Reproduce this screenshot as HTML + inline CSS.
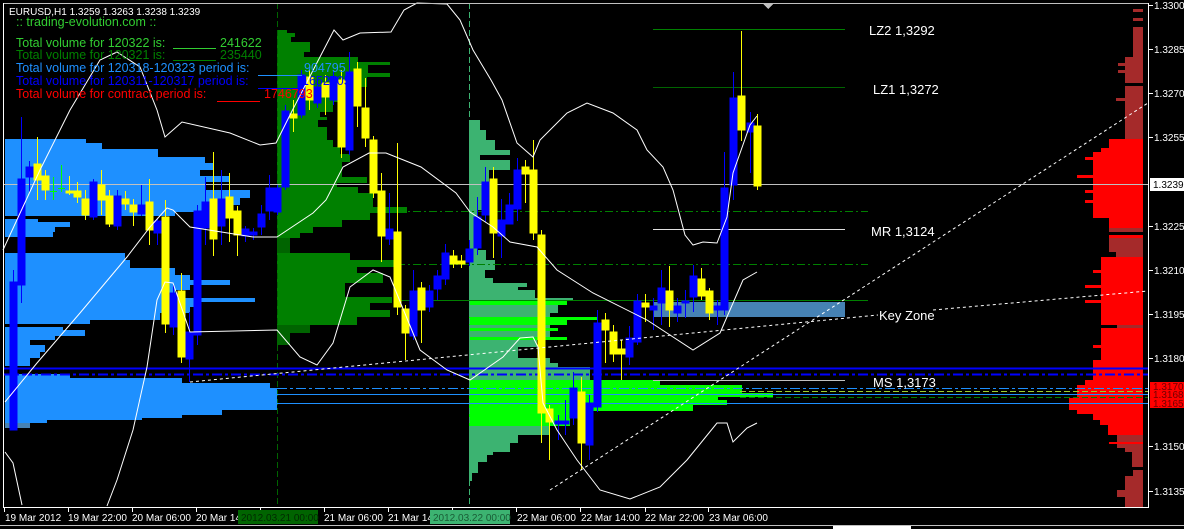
<!DOCTYPE html>
<html><head><meta charset="utf-8"><style>
html,body{margin:0;padding:0;background:#000;width:1184px;height:529px;overflow:hidden}
svg{display:block}
text{font-family:"Liberation Sans",Arial,sans-serif}
</style></head><body>
<svg width="1184" height="529" viewBox="0 0 1184 529" xmlns="http://www.w3.org/2000/svg" shape-rendering="crispEdges">
<rect width="1184" height="529" fill="#000"/>

<g fill="#1e90ff">
<rect x="5" y="139" width="81" height="4"/><rect x="5" y="143" width="97" height="6"/><rect x="5" y="149" width="153" height="8"/>
<rect x="5" y="157" width="200" height="6"/><rect x="5" y="163" width="208" height="7"/><rect x="5" y="170" width="195" height="6"/>
<rect x="5" y="176" width="225" height="6"/><rect x="5" y="182" width="200" height="8"/><rect x="5" y="190" width="245" height="8"/>
<rect x="5" y="198" width="235" height="7"/><rect x="5" y="205" width="225" height="7"/><rect x="5" y="212" width="170" height="4"/>
<rect x="5" y="219" width="33" height="3"/><rect x="5" y="222" width="65" height="5"/><rect x="5" y="227" width="50" height="5"/><rect x="5" y="232" width="48" height="5"/>
<rect x="5" y="253" width="120" height="7"/><rect x="5" y="260" width="125" height="8"/><rect x="5" y="268" width="170" height="7"/>
<rect x="5" y="275" width="185" height="5"/><rect x="5" y="280" width="225" height="5"/><rect x="5" y="285" width="185" height="5"/>
<rect x="5" y="290" width="170" height="8"/><rect x="5" y="298" width="250" height="4"/><rect x="5" y="302" width="195" height="5"/>
<rect x="5" y="307" width="185" height="6"/><rect x="5" y="313" width="155" height="7"/><rect x="5" y="320" width="85" height="4"/>
<rect x="5" y="327" width="58" height="3"/><rect x="5" y="330" width="80" height="6"/><rect x="5" y="336" width="50" height="4"/>
<rect x="5" y="340" width="25" height="5"/><rect x="5" y="345" width="40" height="7"/><rect x="5" y="352" width="35" height="6"/><rect x="5" y="358" width="25" height="8"/>
<rect x="5" y="374" width="65" height="4"/><rect x="5" y="378" width="177" height="5"/><rect x="5" y="383" width="265" height="5"/>
<rect x="5" y="388" width="272" height="22"/><rect x="5" y="410" width="217" height="5"/><rect x="5" y="415" width="177" height="3"/>
<rect x="5" y="418" width="137" height="2"/><rect x="5" y="420" width="42" height="3"/>
</g>
<rect x="5" y="423" width="25" height="5" fill="#4682b4"/>

<g fill="#008000">
<rect x="277" y="30" width="10" height="3"/><rect x="277" y="33" width="18" height="4"/><rect x="277" y="37" width="14" height="5"/>
<rect x="277" y="42" width="33" height="10"/><rect x="277" y="52" width="27" height="5"/><rect x="277" y="57" width="81" height="5"/>
<rect x="277" y="62" width="113" height="3"/><rect x="277" y="65" width="91" height="8"/><rect x="277" y="73" width="113" height="4"/>
<rect x="277" y="77" width="90" height="10"/><rect x="277" y="87" width="73" height="8"/><rect x="277" y="95" width="68" height="7"/>
<rect x="277" y="102" width="56" height="10"/><rect x="277" y="112" width="43" height="5"/><rect x="277" y="117" width="50" height="3"/>
<rect x="277" y="120" width="41" height="7"/><rect x="277" y="127" width="50" height="13"/><rect x="277" y="140" width="56" height="7"/>
<rect x="277" y="147" width="63" height="7"/><rect x="277" y="154" width="73" height="8"/><rect x="277" y="162" width="65" height="15"/>
<rect x="277" y="177" width="90" height="6"/><rect x="277" y="183" width="60" height="4"/><rect x="277" y="187" width="81" height="6"/>
<rect x="277" y="193" width="96" height="14"/><rect x="277" y="207" width="130" height="6"/><rect x="277" y="213" width="93" height="7"/>
<rect x="277" y="220" width="65" height="7"/><rect x="277" y="227" width="36" height="6"/><rect x="277" y="233" width="23" height="5"/>
<rect x="277" y="253" width="73" height="7"/><rect x="277" y="260" width="120" height="7"/><rect x="277" y="267" width="80" height="6"/>
<rect x="277" y="273" width="106" height="10"/><rect x="277" y="283" width="68" height="14"/><rect x="277" y="297" width="115" height="6"/>
<rect x="277" y="303" width="93" height="7"/><rect x="277" y="310" width="113" height="7"/><rect x="277" y="317" width="80" height="8"/>
</g>
<g fill="#006400"><rect x="277" y="238" width="13" height="15"/><rect x="277" y="325" width="33" height="8"/><rect x="277" y="333" width="13" height="12"/></g>

<g fill="#3cb371">
<rect x="469" y="120" width="11" height="10"/><rect x="469" y="130" width="17" height="10"/><rect x="469" y="140" width="26" height="10"/>
<rect x="469" y="150" width="41" height="5"/><rect x="469" y="155" width="11" height="5"/><rect x="469" y="160" width="41" height="10"/>
<rect x="469" y="170" width="20" height="40"/><rect x="469" y="210" width="8" height="40"/>
<rect x="469" y="250" width="17" height="10"/><rect x="469" y="260" width="26" height="10"/><rect x="469" y="270" width="16" height="8"/>
<rect x="469" y="278" width="24" height="5"/><rect x="469" y="283" width="58" height="4"/><rect x="469" y="287" width="49" height="3"/>
<rect x="469" y="290" width="66" height="8"/><rect x="469" y="298" width="104" height="3"/><rect x="469" y="305" width="89" height="8"/>
<rect x="469" y="313" width="81" height="4"/><rect x="469" y="325" width="81" height="3"/><rect x="469" y="331" width="81" height="6"/>
<rect x="469" y="340" width="68" height="7"/><rect x="469" y="347" width="49" height="11"/><rect x="469" y="358" width="81" height="5"/>
<rect x="469" y="363" width="89" height="4"/><rect x="469" y="367" width="121" height="13"/>
<rect x="469" y="426" width="81" height="9"/><rect x="469" y="435" width="49" height="8"/><rect x="469" y="443" width="41" height="9"/>
<rect x="469" y="452" width="24" height="3"/><rect x="469" y="455" width="18" height="7"/><rect x="469" y="462" width="9" height="11"/><rect x="469" y="473" width="3" height="8"/>
</g>
<g fill="#00ff00">
<rect x="469" y="301" width="98" height="4"/><rect x="469" y="317" width="128" height="3"/><rect x="469" y="320" width="98" height="5"/>
<rect x="469" y="328" width="89" height="3"/><rect x="469" y="337" width="98" height="3"/>
<rect x="469" y="380" width="191" height="5"/><rect x="469" y="385" width="273" height="8"/><rect x="469" y="393" width="304" height="4"/>
<rect x="469" y="397" width="249" height="3"/><rect x="469" y="400" width="258" height="5"/><rect x="469" y="405" width="224" height="6"/>
<rect x="469" y="411" width="101" height="15"/>
</g>

<g fill="#a52a2a">
<rect x="1133" y="9" width="10" height="3"/><rect x="1133" y="18" width="10" height="3"/><rect x="1133" y="27" width="10" height="30"/>
<rect x="1125" y="57" width="18" height="26"/><rect x="1118" y="63" width="7" height="3"/><rect x="1118" y="70" width="7" height="3"/>
<rect x="1125" y="86" width="18" height="54"/><rect x="1116" y="98" width="9" height="3"/>
<rect x="1109" y="228" width="34" height="4"/><rect x="1109" y="238" width="34" height="14"/><rect x="1116" y="252" width="27" height="5"/>
<rect x="1117" y="325" width="26" height="3"/>
<rect x="1117" y="435" width="26" height="7"/><rect x="1117" y="444" width="26" height="4"/><rect x="1125" y="448" width="18" height="4"/>
<rect x="1132" y="452" width="11" height="15"/><rect x="1133" y="470" width="10" height="6"/><rect x="1125" y="476" width="18" height="14"/>
<rect x="1117" y="490" width="26" height="7"/><rect x="1125" y="497" width="18" height="10"/>
</g>
<g fill="#ff0000">
<rect x="1109" y="139" width="34" height="9"/><rect x="1101" y="148" width="42" height="4"/><rect x="1093" y="152" width="50" height="66"/>
<rect x="1085" y="157" width="8" height="3"/><rect x="1077" y="175" width="16" height="3"/><rect x="1085" y="190" width="8" height="3"/><rect x="1085" y="200" width="8" height="3"/>
<rect x="1109" y="218" width="34" height="10"/><rect x="1109" y="235" width="34" height="3"/>
<rect x="1101" y="257" width="42" height="68"/><rect x="1093" y="270" width="8" height="3"/><rect x="1085" y="285" width="16" height="3"/><rect x="1085" y="300" width="16" height="3"/>
<rect x="1101" y="328" width="42" height="32"/><rect x="1093" y="345" width="8" height="3"/>
<rect x="1093" y="360" width="50" height="20"/><rect x="1085" y="380" width="58" height="5"/><rect x="1077" y="385" width="66" height="13"/>
<rect x="1069" y="398" width="74" height="12"/><rect x="1077" y="410" width="66" height="4"/><rect x="1093" y="414" width="50" height="6"/>
<rect x="1100" y="420" width="43" height="5"/><rect x="1108" y="425" width="35" height="10"/><rect x="1109" y="442" width="34" height="2"/>
</g>

<rect x="653" y="302" width="192" height="15" fill="#4682b4"/>

<line x1="277.5" y1="3" x2="277.5" y2="507" stroke="#006400" stroke-dasharray="6,3"/>
<line x1="469.5" y1="3" x2="469.5" y2="507" stroke="#3cb371" stroke-dasharray="6,3"/>

<line x1="3" y1="184.5" x2="1148" y2="184.5" stroke="#c0c0c0"/>
<line x1="397" y1="211.5" x2="868" y2="211.5" stroke="#008000" stroke-dasharray="8,3,2,3"/>
<line x1="397" y1="264.5" x2="868" y2="264.5" stroke="#008000" stroke-dasharray="8,3,2,3"/>
<line x1="397" y1="300.5" x2="868" y2="300.5" stroke="#008000"/>
<line x1="653" y1="29.5" x2="845" y2="29.5" stroke="#008000"/>
<line x1="653" y1="87.5" x2="845" y2="87.5" stroke="#006400"/>
<line x1="653" y1="229.5" x2="845" y2="229.5" stroke="#e0e0e0"/>
<line x1="653" y1="380.5" x2="845" y2="380.5" stroke="#c0c0c0"/>
<line x1="3" y1="368.5" x2="1148" y2="368.5" stroke="#0000ff" stroke-width="2"/>
<line x1="3" y1="374.5" x2="1148" y2="374.5" stroke="#0000ff" stroke-dasharray="10,3,3,3" stroke-width="2"/>
<line x1="277" y1="388.5" x2="1148" y2="388.5" stroke="#1e90ff" stroke-dasharray="10,3,3,3"/>
<line x1="740" y1="391.5" x2="1148" y2="391.5" stroke="#9acd32" stroke-dasharray="6,3"/>
<line x1="277" y1="394.5" x2="1148" y2="394.5" stroke="#1e90ff"/>
<line x1="740" y1="397.5" x2="1148" y2="397.5" stroke="#008000" stroke-dasharray="6,3"/>
<line x1="277" y1="403.5" x2="1148" y2="403.5" stroke="#1e90ff"/>

<g stroke-width="1">
<g stroke="#0000ff" fill="#0000ff">
<line x1="13.5" y1="270" x2="13.5" y2="430"/><rect x="10" y="282" width="7" height="148"/>
<line x1="21.5" y1="117" x2="21.5" y2="303"/><rect x="18" y="179" width="7" height="106"/>
<line x1="29.5" y1="161" x2="29.5" y2="193"/><rect x="26" y="167" width="7" height="10"/>
<line x1="93.5" y1="179" x2="93.5" y2="220"/><rect x="90" y="182" width="7" height="35"/>
<line x1="117.5" y1="190" x2="117.5" y2="230"/><rect x="114" y="196" width="7" height="30"/>
<line x1="141.5" y1="185" x2="141.5" y2="216"/><rect x="138" y="205" width="7" height="9"/>
<line x1="157.5" y1="218" x2="157.5" y2="245"/><rect x="154" y="221" width="7" height="12"/>
<line x1="173.5" y1="285" x2="173.5" y2="335"/><rect x="170" y="293" width="7" height="34"/>
<line x1="189.5" y1="312" x2="189.5" y2="382"/><rect x="186" y="332" width="7" height="27"/>
<line x1="197.5" y1="205" x2="197.5" y2="345"/><rect x="194" y="211" width="7" height="124"/>
<line x1="205.5" y1="177" x2="205.5" y2="245"/><rect x="202" y="202" width="7" height="26"/>
<line x1="221.5" y1="170" x2="221.5" y2="245"/><rect x="218" y="199" width="7" height="27"/>
<line x1="245.5" y1="226" x2="245.5" y2="242"/><rect x="242" y="229" width="7" height="7"/>
<line x1="253.5" y1="228" x2="253.5" y2="240"/><rect x="250" y="232" width="7" height="3"/>
<line x1="261.5" y1="205" x2="261.5" y2="235"/><rect x="258" y="214" width="7" height="13"/>
<line x1="269.5" y1="175" x2="269.5" y2="220"/><rect x="266" y="188" width="7" height="23"/>
<line x1="277.5" y1="185" x2="277.5" y2="215"/><rect x="274" y="188" width="7" height="24"/>
<line x1="285.5" y1="105" x2="285.5" y2="190"/><rect x="282" y="111" width="7" height="76"/>
<line x1="301.5" y1="70" x2="301.5" y2="118"/><rect x="298" y="75" width="7" height="40"/>
<line x1="317.5" y1="80" x2="317.5" y2="108"/><rect x="314" y="87" width="7" height="16"/>
<line x1="333.5" y1="70" x2="333.5" y2="105"/><rect x="330" y="77" width="7" height="23"/>
<line x1="349.5" y1="52" x2="349.5" y2="155"/><rect x="346" y="72" width="7" height="78"/>
<line x1="389.5" y1="193" x2="389.5" y2="245"/><rect x="386" y="229" width="7" height="10"/>
<line x1="413.5" y1="270" x2="413.5" y2="340"/><rect x="410" y="291" width="7" height="45"/>
<line x1="429.5" y1="285" x2="429.5" y2="312"/><rect x="426" y="291" width="7" height="16"/>
<line x1="437.5" y1="270" x2="437.5" y2="300"/><rect x="434" y="276" width="7" height="13"/>
<line x1="445.5" y1="244" x2="445.5" y2="285"/><rect x="442" y="253" width="7" height="26"/>
<line x1="469.5" y1="240" x2="469.5" y2="266"/><rect x="466" y="249" width="7" height="13"/>
<line x1="477.5" y1="197" x2="477.5" y2="255"/><rect x="474" y="217" width="7" height="31"/>
<line x1="485.5" y1="167" x2="485.5" y2="222"/><rect x="482" y="182" width="7" height="33"/>
<line x1="501.5" y1="199" x2="501.5" y2="258"/><rect x="498" y="220" width="7" height="16"/>
<line x1="509.5" y1="193" x2="509.5" y2="222"/><rect x="506" y="205" width="7" height="19"/>
<line x1="517.5" y1="158" x2="517.5" y2="221"/><rect x="514" y="170" width="7" height="39"/>
<line x1="558.5" y1="415" x2="558.5" y2="440"/><rect x="555" y="421" width="7" height="3"/>
<line x1="565.5" y1="400" x2="565.5" y2="435"/><rect x="562" y="421" width="7" height="3"/>
<line x1="573.5" y1="372" x2="573.5" y2="425"/><rect x="570" y="388" width="7" height="30"/>
<line x1="589.5" y1="395" x2="589.5" y2="460"/><rect x="586" y="403" width="7" height="42"/>
<line x1="597.5" y1="310" x2="597.5" y2="412"/><rect x="594" y="323" width="7" height="84"/>
<line x1="629.5" y1="326" x2="629.5" y2="365"/><rect x="626" y="338" width="7" height="19"/>
<line x1="637.5" y1="294" x2="637.5" y2="345"/><rect x="634" y="301" width="7" height="41"/>
<line x1="653.5" y1="298" x2="653.5" y2="330"/><rect x="650" y="306" width="7" height="4"/>
<line x1="661.5" y1="270" x2="661.5" y2="325"/><rect x="658" y="288" width="7" height="15"/>
<line x1="677.5" y1="298" x2="677.5" y2="322"/><rect x="674" y="306" width="7" height="7"/>
<line x1="685.5" y1="290" x2="685.5" y2="318"/><rect x="682" y="301" width="7" height="2"/>
<line x1="693.5" y1="265" x2="693.5" y2="312"/><rect x="690" y="276" width="7" height="21"/>
<line x1="717.5" y1="300" x2="717.5" y2="325"/><rect x="714" y="306" width="7" height="4"/>
<line x1="724.5" y1="152" x2="724.5" y2="315"/><rect x="721" y="188" width="7" height="122"/>
<line x1="733.5" y1="72" x2="733.5" y2="200"/><rect x="730" y="98" width="7" height="87"/>
<line x1="750.5" y1="112" x2="750.5" y2="173"/><rect x="747" y="123" width="7" height="9"/>
</g>
<g stroke="#ffff00" fill="#ffff00">
<line x1="37.5" y1="137" x2="37.5" y2="200"/><rect x="34" y="164" width="7" height="16"/>
<line x1="45.5" y1="170" x2="45.5" y2="200"/><rect x="42" y="176" width="7" height="14"/>
<line x1="69.5" y1="176" x2="69.5" y2="195"/><rect x="66" y="191" width="7" height="2"/>
<line x1="77.5" y1="182" x2="77.5" y2="203"/><rect x="74" y="191" width="7" height="6"/>
<line x1="85.5" y1="190" x2="85.5" y2="220"/><rect x="82" y="199" width="7" height="16"/>
<line x1="101.5" y1="170" x2="101.5" y2="215"/><rect x="98" y="185" width="7" height="15"/>
<line x1="109.5" y1="190" x2="109.5" y2="227"/><rect x="106" y="196" width="7" height="28"/>
<line x1="125.5" y1="191" x2="125.5" y2="210"/><rect x="122" y="199" width="7" height="5"/>
<line x1="133.5" y1="199" x2="133.5" y2="226"/><rect x="130" y="205" width="7" height="7"/>
<line x1="149.5" y1="179" x2="149.5" y2="245"/><rect x="146" y="202" width="7" height="28"/>
<line x1="165.5" y1="200" x2="165.5" y2="333"/><rect x="162" y="217" width="7" height="107"/>
<line x1="181.5" y1="273" x2="181.5" y2="363"/><rect x="178" y="291" width="7" height="66"/>
<line x1="213.5" y1="152" x2="213.5" y2="256"/><rect x="210" y="199" width="7" height="40"/>
<line x1="229.5" y1="173" x2="229.5" y2="242"/><rect x="226" y="197" width="7" height="21"/>
<line x1="237.5" y1="206" x2="237.5" y2="256"/><rect x="234" y="211" width="7" height="24"/>
<line x1="293.5" y1="100" x2="293.5" y2="132"/><rect x="290" y="114" width="7" height="4"/>
<line x1="309.5" y1="70" x2="309.5" y2="110"/><rect x="306" y="77" width="7" height="23"/>
<line x1="325.5" y1="75" x2="325.5" y2="115"/><rect x="322" y="83" width="7" height="14"/>
<line x1="341.5" y1="70" x2="341.5" y2="158"/><rect x="338" y="80" width="7" height="67"/>
<line x1="357.5" y1="62" x2="357.5" y2="127"/><rect x="354" y="69" width="7" height="37"/>
<line x1="365.5" y1="78" x2="365.5" y2="147"/><rect x="362" y="108" width="7" height="30"/>
<line x1="373.5" y1="136" x2="373.5" y2="198"/><rect x="370" y="140" width="7" height="53"/>
<line x1="381.5" y1="173" x2="381.5" y2="262"/><rect x="378" y="191" width="7" height="45"/>
<line x1="397.5" y1="143" x2="397.5" y2="315"/><rect x="394" y="232" width="7" height="75"/>
<line x1="405.5" y1="305" x2="405.5" y2="360"/><rect x="402" y="309" width="7" height="24"/>
<line x1="421.5" y1="282" x2="421.5" y2="343"/><rect x="418" y="288" width="7" height="22"/>
<line x1="453.5" y1="250" x2="453.5" y2="268"/><rect x="450" y="256" width="7" height="8"/>
<line x1="461.5" y1="255" x2="461.5" y2="268"/><rect x="458" y="261" width="7" height="3"/>
<line x1="493.5" y1="167" x2="493.5" y2="258"/><rect x="490" y="179" width="7" height="54"/>
<line x1="525.5" y1="160" x2="525.5" y2="203"/><rect x="522" y="167" width="7" height="7"/>
<line x1="533.5" y1="140" x2="533.5" y2="240"/><rect x="530" y="170" width="7" height="63"/>
<line x1="541.5" y1="230" x2="541.5" y2="443"/><rect x="538" y="235" width="7" height="178"/>
<line x1="549.5" y1="405" x2="549.5" y2="460"/><rect x="546" y="409" width="7" height="13"/>
<line x1="581.5" y1="377" x2="581.5" y2="470"/><rect x="578" y="392" width="7" height="51"/>
<line x1="605.5" y1="313" x2="605.5" y2="363"/><rect x="602" y="320" width="7" height="10"/>
<line x1="613.5" y1="325" x2="613.5" y2="362"/><rect x="610" y="332" width="7" height="22"/>
<line x1="621.5" y1="340" x2="621.5" y2="380"/><rect x="618" y="349" width="7" height="5"/>
<line x1="645.5" y1="294" x2="645.5" y2="322"/><rect x="642" y="303" width="7" height="4"/>
<line x1="669.5" y1="266" x2="669.5" y2="327"/><rect x="666" y="291" width="7" height="19"/>
<line x1="701.5" y1="268" x2="701.5" y2="300"/><rect x="698" y="279" width="7" height="17"/>
<line x1="709.5" y1="288" x2="709.5" y2="320"/><rect x="706" y="291" width="7" height="22"/>
<line x1="741.5" y1="31" x2="741.5" y2="141"/><rect x="738" y="96" width="7" height="34"/>
<line x1="757.5" y1="114" x2="757.5" y2="190"/><rect x="754" y="126" width="7" height="60"/>
</g>
<g stroke="#00ff00"><line x1="53.5" y1="177" x2="53.5" y2="200"/><line x1="50" y1="191.5" x2="57" y2="191.5"/><line x1="61.5" y1="165" x2="61.5" y2="192"/><line x1="58" y1="188.5" x2="65" y2="188.5"/></g>
</g>

<g fill="none" stroke="#fff" stroke-width="1" shape-rendering="auto">
<polyline points="3,250 40,170 70,110 100,60 117,52 140,67 157,110 165,137 182,122 230,133 260,145 276,143 291,113 308,80 334,30 343,40 360,33 391,32 404,10 417,3 447,4 460,20 473,50 491,80 502,100 517,143 533,157 540,140 567,113 587,103 613,113 637,130 647,150 663,167 673,190 685,235 693,245 703,242 717,243 727,217 733,173 750,125 757,116"/>
<polyline points="5,402 37,363 80,313 127,257 150,227 167,208 173,210 190,227 253,237 277,237 313,213 326,200 343,167 369,153 386,153 421,167 456,193 470,212 493,227 510,242 537,247 557,270 593,293 647,320 693,350 720,333 743,280 757,272"/>
<polyline points="107,506 117,480 133,430 147,367 157,300 165,282 173,283 190,332 277,330 300,357 317,365 333,343 350,287 373,270 390,277 420,350 447,370 470,380 503,357 520,338 533,337 538,347 543,403 557,430 577,460 600,490 630,499 660,487 687,460 717,423 727,423 733,442 747,428 757,423"/>
<polyline points="5,452 13,463 22,505"/>
</g>
<g fill="none" stroke="#fff" stroke-dasharray="3,3" shape-rendering="auto">
<line x1="190" y1="382" x2="878" y2="315"/><line x1="933" y1="310" x2="1148" y2="291"/>
<line x1="550" y1="490" x2="1148" y2="103"/>
</g>

<line x1="3" y1="3.5" x2="1148" y2="3.5" stroke="#c0c0c0"/>
<line x1="3.5" y1="3" x2="3.5" y2="508" stroke="#fff"/>
<line x1="1148.5" y1="3" x2="1148.5" y2="508" stroke="#fff"/>
<line x1="3" y1="507.5" x2="1149" y2="507.5" stroke="#fff"/>
<path d="M763 4h10l-5 5z" fill="#c0c0c0"/>

<g stroke="#fff">
<line x1="1149" y1="5.5" x2="1153" y2="5.5"/><line x1="1149" y1="49.5" x2="1153" y2="49.5"/><line x1="1149" y1="93.5" x2="1153" y2="93.5"/>
<line x1="1149" y1="137.5" x2="1153" y2="137.5"/><line x1="1149" y1="226.5" x2="1153" y2="226.5"/><line x1="1149" y1="270.5" x2="1153" y2="270.5"/>
<line x1="1149" y1="314.5" x2="1153" y2="314.5"/><line x1="1149" y1="358.5" x2="1153" y2="358.5"/><line x1="1149" y1="446.5" x2="1153" y2="446.5"/><line x1="1149" y1="491.5" x2="1153" y2="491.5"/>
<line x1="4.5" y1="508" x2="4.5" y2="512"/><line x1="68.5" y1="508" x2="68.5" y2="512"/><line x1="132.5" y1="508" x2="132.5" y2="512"/>
<line x1="196.5" y1="508" x2="196.5" y2="512"/><line x1="260.5" y1="508" x2="260.5" y2="512"/><line x1="324.5" y1="508" x2="324.5" y2="512"/>
<line x1="388.5" y1="508" x2="388.5" y2="512"/><line x1="452.5" y1="508" x2="452.5" y2="512"/><line x1="516.5" y1="508" x2="516.5" y2="512"/>
<line x1="580.5" y1="508" x2="580.5" y2="512"/><line x1="645.5" y1="508" x2="645.5" y2="512"/><line x1="708.5" y1="508" x2="708.5" y2="512"/>
</g>

<g fill="#fff" font-size="10">
<text x="1154" y="9">1.3300</text><text x="1154" y="53">1.3285</text><text x="1154" y="97">1.3270</text>
<text x="1154" y="141">1.3255</text><text x="1154" y="230">1.3225</text><text x="1154" y="274">1.3210</text>
<text x="1154" y="318">1.3195</text><text x="1154" y="362">1.3180</text><text x="1154" y="450">1.3150</text><text x="1154" y="495">1.3135</text>
</g>
<rect x="1150" y="178" width="34" height="13" fill="#fff"/>
<text x="1153" y="188" font-size="10" fill="#000">1.3239</text>
<rect x="1150" y="382" width="34" height="26" fill="#ff0000"/>
<g font-size="10" fill="#700000"><text x="1153" y="390">1.3170</text><text x="1153" y="398">1.3168</text><text x="1153" y="407">1.3165</text></g>

<g fill="#fff" font-size="10">
<text x="5" y="521">19 Mar 2012</text><text x="68" y="521">19 Mar 22:00</text><text x="132" y="521">20 Mar 06:00</text>
<text x="196" y="521">20 Mar 14</text><text x="324" y="521">21 Mar 06:00</text><text x="388" y="521">21 Mar 14</text>
<text x="517" y="521">22 Mar 06:00</text><text x="581" y="521">22 Mar 14:00</text><text x="645" y="521">22 Mar 22:00</text><text x="709" y="521">23 Mar 06:00</text>
</g>
<rect x="238" y="510" width="80" height="14" fill="#006400"/>
<text x="241" y="521" font-size="10" fill="#002a00">2012.03.21 00:00</text>
<rect x="430" y="510" width="80" height="14" fill="#3cb371"/>
<text x="433" y="521" font-size="10" fill="#1a5c36">2012.03.22 00:00</text>
<line x1="0" y1="525.5" x2="1184" y2="525.5" stroke="#c0c0c0"/>
<rect x="833" y="526" width="78" height="3" fill="#fff"/>

<g fill="#fff" font-size="13">
<text x="869" y="35">LZ2 1,3292</text><text x="873" y="94">LZ1 1,3272</text><text x="871" y="236">MR 1,3124</text>
<text x="879" y="320">Key Zone</text><text x="873" y="387">MS 1,3173</text>
</g>

<text x="9" y="15" font-size="10" fill="#fff">EURUSD,H1  1.3259 1.3263 1.3238 1.3239</text>
<text x="16" y="26" font-size="12.5" fill="#32cd32">:: trading-evolution.com ::</text>
<g font-size="12.5">
<text x="16" y="47" fill="#32cd32">Total volume for 120322 is:</text>
<line x1="173" y1="48.5" x2="216" y2="48.5" stroke="#32cd32"/><text x="220" y="47" fill="#32cd32">241622</text>
<text x="16" y="59" fill="#008000">Total volume for 120321 is:</text>
<line x1="173" y1="60.5" x2="216" y2="60.5" stroke="#008000"/><text x="220" y="59" fill="#008000">235440</text>
<text x="16" y="72" fill="#1e90ff">Total volume for 120318-120323 period is:</text>
<line x1="258" y1="75.5" x2="302" y2="75.5" stroke="#1e90ff"/><text x="304" y="72" fill="#1e90ff">904795</text>
<text x="16" y="85" fill="#0000ff">Total volume for 120311-120317 period is:</text>
<line x1="258" y1="88.5" x2="302" y2="88.5" stroke="#0000ff"/><text x="302" y="85" fill="#0000ff">1652705</text>
<text x="16" y="98" fill="#ff0000">Total volume for contract period is:</text>
<line x1="217" y1="101.5" x2="260" y2="101.5" stroke="#ff0000"/><text x="264" y="98" fill="#ff0000">1746793</text>
</g>
</svg>
</body></html>
